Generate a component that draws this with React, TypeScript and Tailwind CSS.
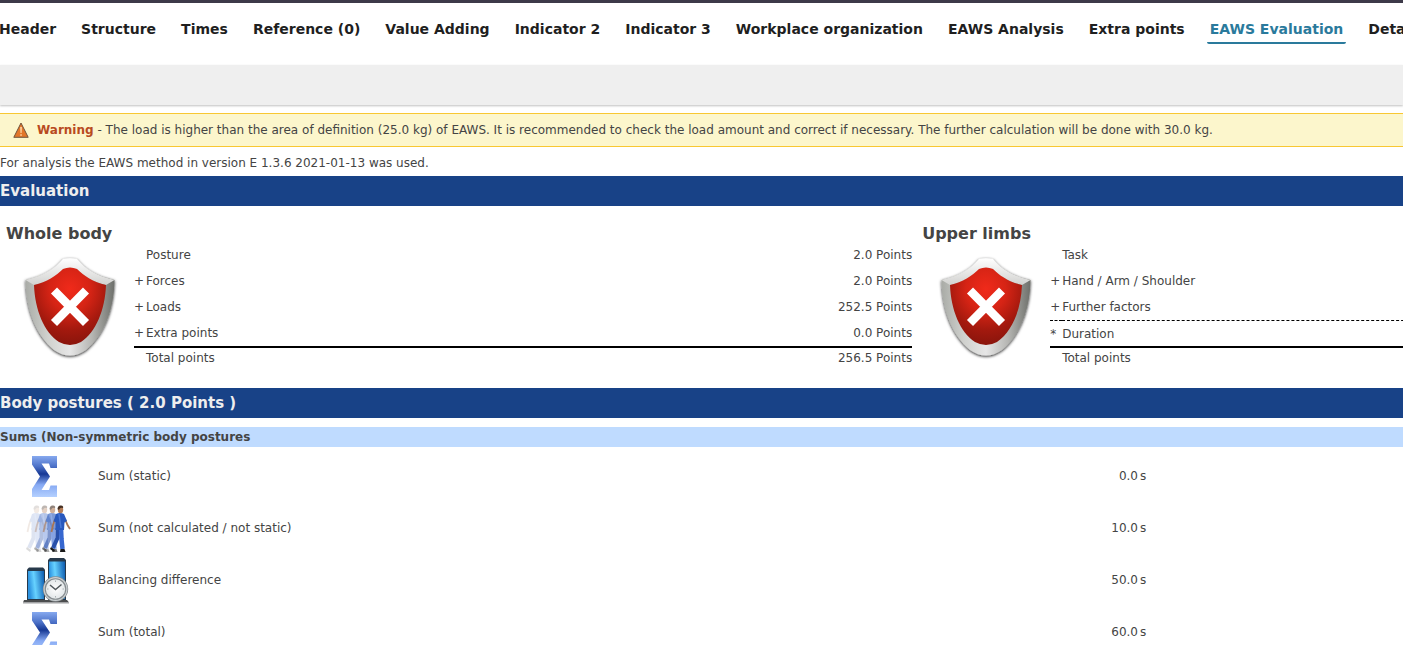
import type { ReactNode } from "react";

const tabs = [
  "Header",
  "Structure",
  "Times",
  "Reference (0)",
  "Value Adding",
  "Indicator 2",
  "Indicator 3",
  "Workplace organization",
  "EAWS Analysis",
  "Extra points",
  "EAWS Evaluation",
  "Details",
];

type ScoreRow = { sign?: string; label: string; value?: string; line?: "dashed" | "solid" };

const wholeBody: ScoreRow[] = [
  { label: "Posture", value: "2.0 Points" },
  { sign: "+", label: "Forces", value: "2.0 Points" },
  { sign: "+", label: "Loads", value: "252.5 Points" },
  { sign: "+", label: "Extra points", value: "0.0 Points" },
  { label: "Total points", value: "256.5 Points", line: "solid" },
];

const upperLimbs: ScoreRow[] = [
  { label: "Task" },
  { sign: "+", label: "Hand / Arm / Shoulder" },
  { sign: "+", label: "Further factors" },
  { sign: "*", label: "Duration", line: "dashed" },
  { label: "Total points", line: "solid" },
];

const sums = [
  { icon: <SigmaIcon id="static" />, label: "Sum (static)", value: "0.0" },
  { icon: <WalkersIcon />, label: "Sum (not calculated / not static)", value: "10.0" },
  { icon: <BalanceIcon />, label: "Balancing difference", value: "50.0" },
  { icon: <SigmaIcon id="total" />, label: "Sum (total)", value: "60.0" },
];

export default function App() {
  return (
    <div className="h-screen overflow-hidden bg-white font-['Verdana','DejaVu_Sans',sans-serif] text-[12px] leading-4 text-[#444444]">
      <div className="h-[3px] bg-[#3d3a49]" />
      <nav className="-ml-1 flex h-[62px] items-start gap-[19px] overflow-hidden pt-4 text-[14px] font-bold whitespace-nowrap">
        {tabs.map((tab) => (
          <a
            key={tab}
            href="#"
            className={
              tab === "EAWS Evaluation"
                ? "h-[25px] rounded-xs border-b-2 border-[#2a7a9c] px-[3px] leading-5 text-[#2a7a9c]"
                : "h-[25px] px-[3px] leading-5 text-[#1f1f1f]"
            }
          >
            {tab}
          </a>
        ))}
      </nav>
      <div className="h-10 bg-[#efefef] shadow-[0_1px_2px_rgba(0,0,0,0.25)]" />

      <div className="mt-2 flex h-[34px] items-center gap-2 border-y border-[#f8c732] bg-[#fcf6cc] pl-[13px] whitespace-nowrap">
        <WarningIcon />
        <p>
          <strong className="text-[#b84a21]">Warning</strong> - The load is higher than the area of definition (25.0 kg)
          of EAWS. It is recommended to check the load amount and correct if necessary. The further calculation will be
          done with 30.0 kg.
        </p>
      </div>
      <p className="pt-2 pb-[5px]">For analysis the EAWS method in version E 1.3.6 2021-01-13 was used.</p>

      <SectionBar>Evaluation</SectionBar>
      <div className="flex pt-4 pb-5">
        <ScoreBlock title="Whole body" id="whole" rows={wholeBody} />
        <ScoreBlock title="Upper limbs" id="upper" rows={upperLimbs} />
      </div>

      <SectionBar>Body postures ( 2.0 Points )</SectionBar>
      <h3 className="mt-[9px] bg-[#bfdbff] leading-5 font-bold">Sums (Non-symmetric body postures</h3>
      <table className="mt-[3px] w-[81.7%]">
        <tbody>
          {sums.map((row) => (
            <tr key={row.label} className="h-[52px]">
              <td className="w-[98px] p-0 pt-0.5 pl-[22px]">{row.icon}</td>
              <td className="p-0">{row.label}</td>
              <td className="p-0 text-right">
                {row.value}
                <span className="ml-0.5">s</span>
              </td>
            </tr>
          ))}
        </tbody>
      </table>
    </div>
  );
}

function SectionBar({ children }: { children: ReactNode }) {
  return <h2 className="h-[30px] bg-[#184287] text-[15px] leading-[30px] font-bold text-[#eeeeee]">{children}</h2>;
}

function ScoreBlock({ title, id, rows }: { title: string; id: string; rows: ScoreRow[] }) {
  return (
    <section className="w-[65.3%] shrink-0 pr-1 pl-[6px]">
      <h3 className="h-5 text-[16px] leading-6 font-bold">{title}</h3>
      <div className="flex items-start">
        <div className="w-32 shrink-0 pt-[13px] pl-[14px]">
          <ShieldIcon id={id} />
        </div>
        <table className="flex-1 border-separate border-spacing-0">
          <tbody className="table w-full">
            {rows.map((row) => (
              <tr
                key={row.label}
                className={
                  row.line === "solid"
                    ? "h-[22px] *:border-t-2 *:border-black"
                    : row.line === "dashed"
                      ? "h-[26px] *:border-t *:border-dashed *:border-black"
                      : "h-[26px]"
                }
              >
                <td className="w-3 p-0">{row.sign}</td>
                <td className="p-0">{row.label}</td>
                <td className="p-0 text-right">{row.value}</td>
              </tr>
            ))}
          </tbody>
        </table>
      </div>
    </section>
  );
}

function WarningIcon() {
  return (
    <svg width="16" height="16" viewBox="0 0 16 16" aria-hidden="true">
      <path d="M8 1 15.2 15.3H.8Z" fill="#e2762b" stroke="#70543c" strokeWidth="1" strokeLinejoin="round" />
      <path d="M7.2 5h1.7L8.6 11H7.5Z M7.3 12.3h1.5v1.4H7.3Z" fill="#ffd9a8" />
    </svg>
  );
}

function ShieldIcon({ id }: { id: string }) {
  return (
    <svg width="100" height="106" viewBox="0 0 100 106" aria-hidden="true">
      <defs>
        <linearGradient id={`${id}-rim`} x1="0" y1="0" x2="1" y2="0">
          <stop offset="0" stopColor="#a9aba6" />
          <stop offset="0.25" stopColor="#d0d1ce" />
          <stop offset="0.5" stopColor="#e6e6e6" />
          <stop offset="0.75" stopColor="#b5b5b2" />
          <stop offset="1" stopColor="#6d6f6a" />
        </linearGradient>
        <linearGradient id={`${id}-top`} x1="0" y1="0" x2="0" y2="1">
          <stop offset="0" stopColor="#ffffff" />
          <stop offset="1" stopColor="#d2d2d0" />
        </linearGradient>
        <radialGradient id={`${id}-red`} cx="0.5" cy="0.28" r="0.7">
          <stop offset="0" stopColor="#f02a1a" />
          <stop offset="0.4" stopColor="#d62415" />
          <stop offset="0.75" stopColor="#a3190e" />
          <stop offset="1" stopColor="#8c150c" />
        </radialGradient>
        <filter id={`${id}-shadow`} x="-10%" y="-10%" width="120%" height="120%">
          <feDropShadow dx="0" dy="1" stdDeviation="1.8" floodColor="#000000" floodOpacity="0.9" />
        </filter>
      </defs>
      <path
        d="M43 4Q50 2.500 57 4C65 14 77 21 94.500 25C94 55 84 80 66 95Q50 106 34 95C16 80 6 55 5.500 25C23 21 35 14 43 4Z"
        fill={`url(#${id}-rim)`}
        filter={`url(#${id}-shadow)`}
      />
      <path
        d="M43 4Q50 2.500 57 4C65 14 77 21 94.500 25L86 30C73 27 64 21 57 14Q50 11 43 14C36 21 27 27 14 30L5.500 25C23 21 35 14 43 4Z"
        fill={`url(#${id}-top)`}
      />
      <path
        d="M43 14Q50 11 57 14C64 21 73 27 86 30C85 55 76 77 61 87Q50 93 39 87C24 77 15 55 14 30C27 27 36 21 43 14Z"
        fill={`url(#${id}-red)`}
      />
      <path d="M34 35.500 66 68M66 35.500 34 68" stroke="#ffffff" strokeWidth="8.500" />
    </svg>
  );
}

function SigmaIcon({ id }: { id: string }) {
  return (
    <svg width="45" height="42" viewBox="0 0 45 42" aria-hidden="true">
      <defs>
        <linearGradient id={`sigma-${id}`} x1="0" y1="0" x2="0" y2="1">
          <stop offset="0" stopColor="#86a9ef" />
          <stop offset="0.25" stopColor="#4d72c8" />
          <stop offset="0.44" stopColor="#173894" />
          <stop offset="0.7" stopColor="#86a9f3" />
          <stop offset="1" stopColor="#b4d0ff" />
        </linearGradient>
      </defs>
      <path
        d="M10 0H35V12H28.500L27 7.500H19.500L28 20.500 19.500 34H27L28.500 29.500H35V41H10V33L18 20.500 10 8.500Z"
        fill={`url(#sigma-${id})`}
      />
    </svg>
  );
}

function WalkersIcon() {
  const figures = [
    { x: -24, opacity: 0.15 },
    { x: -16, opacity: 0.35 },
    { x: -8, opacity: 0.6 },
    { x: 0, opacity: 1 },
  ];
  return (
    <svg width="50" height="48" viewBox="0 0 50 48" aria-hidden="true">
      {figures.map((f) => (
        <g key={f.x} transform={`translate(${f.x} 0)`} opacity={f.opacity}>
          <path d="M33 14 31 20 29.500 27M43 14 45.500 20 48 24" stroke="#a87654" strokeWidth="1.800" fill="none" />
          <path d="M35.500 23 35.500 33 31 43" stroke="#2950a9" strokeWidth="4" fill="none" />
          <path d="M39 23 39.500 34 40.500 44" stroke="#3767cf" strokeWidth="4.500" fill="none" />
          <path d="M34 9Q38 7 42 9L45 16 42.500 17.500 42 25H33.500L33.500 17 31.500 16.500Z" fill="#2858bd" />
          <path d="M37 9 39 23" stroke="#4876d6" strokeWidth="1.500" />
          <ellipse cx="38.500" cy="4.700" rx="2.700" ry="3.600" fill="#b47d58" />
          <path d="M35.500 4Q36 0 39 .5 42 1 41 3Q38 2 37 5Z" fill="#453023" />
          <path d="M29 42 33 45 32 47 28 44ZM38.500 44H42.500L43.500 47H38Z" fill="#191919" />
        </g>
      ))}
    </svg>
  );
}

function BalanceIcon() {
  return (
    <svg width="48" height="48" viewBox="0 0 48 48" aria-hidden="true">
      <defs>
        <linearGradient id="bar-fill" x1="0" y1="0.2" x2="1" y2="0">
          <stop offset="0" stopColor="#2d93e0" />
          <stop offset="0.35" stopColor="#67d2ff" />
          <stop offset="1" stopColor="#0b59ae" />
        </linearGradient>
        <radialGradient id="clock-face">
          <stop offset="0" stopColor="#ffffff" />
          <stop offset="1" stopColor="#dfe4e6" />
        </radialGradient>
      </defs>
      <path d="M2 43H45L47 45.500H1Z" fill="#4b4d4e" />
      <path d="M1 45.500H47V46.500H1Z" fill="#a0a2a3" />
      <path d="M5 12.500 7 10.500H21L23 12.500V43H5Z" fill="#27394b" />
      <path d="M6 14H22V42H6Z" fill="url(#bar-fill)" />
      <path d="M26 3 28 1H42L44 3V43H26Z" fill="#27394b" />
      <path d="M27 4.500H43V42H27Z" fill="url(#bar-fill)" />
      <circle cx="33.500" cy="32" r="11.200" fill="url(#clock-face)" stroke="#858b8e" strokeWidth="3" />
      <circle cx="33.500" cy="32" r="11.400" fill="none" stroke="#ccd1d3" strokeWidth="1.200" />
      <path d="M28 28 33.500 32.500 39.500 27.500" stroke="#52595d" strokeWidth="1.500" fill="none" />
      <path d="M33.500 23.500V25M33.500 39V40.500M25 32H26.500M40.500 32H42" stroke="#a9b0b3" strokeWidth="1" />
    </svg>
  );
}
